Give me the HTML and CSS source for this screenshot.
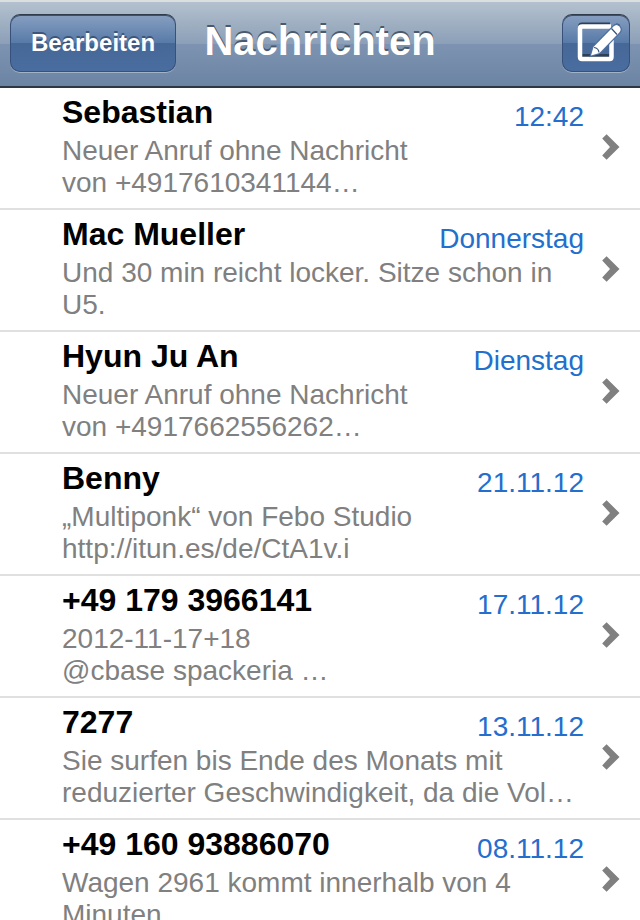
FILE: index.html
```html
<!DOCTYPE html>
<html lang="de">
<head>
    <meta charset="UTF-8">
    <meta name="viewport" content="width=device-width, initial-scale=1">
    <title>Nachrichten</title>
    <link rel="stylesheet" href="styles.css">
</head>
<body>
    <svg class="symbols" aria-hidden="true">
        <symbol id="chevron" viewBox="0 0 18 26">
            <path d="M0.2 4.6 4.600 0.2 17.5 13 4.600 25.8 0.2 21.400 8 13Z" fill="#808080"/>
        </symbol>
    </svg>

    <header class="navbar">
        <button class="navbar__button navbar__button--edit" type="button">Bearbeiten</button>
        <h1 class="navbar__title">Nachrichten</h1>
        <button class="navbar__button navbar__button--compose" type="button" aria-label="Neue Nachricht">
            <svg class="compose" viewBox="0 0 44 40">
                <!-- shadow above the strokes -->
                <path d="M33 1.500H5Q3 1.500 3 3.500M5 33H32" fill="none" stroke="#2d3f59" stroke-width="4"/>
                <path d="M14 31 16.500 23 37 2Q40 -1 43 2L42 8 22 28.500Z" fill="#2d3f59"/>
                <!-- sheet -->
                <path d="M34 3.500H5Q3 3.500 3 5.500V34Q3 36 5 36H32.500Q34.500 36 34.500 34V17" fill="none" stroke="#fff" stroke-width="4.500"/>
                <!-- pencil -->
                <path d="M14 32.500 16.500 24 36.500 3.500Q39.500 0.500 42.300 3.500 45 6.500 42.300 9.500L22.500 30Z" fill="#fff" stroke="#4d70a0" stroke-width="2.500" paint-order="stroke"/>
                <path d="M17 24.500Q21.500 25 22 29.500M34.500 5.500 40 11.500" fill="none" stroke="#35537f" stroke-width="1.200"/>
            </svg>
        </button>
    </header>

    <ul class="messages">
        <li>
            <a class="message" href="#sebastian">
                <div class="message__body">
                    <h2 class="message__name">Sebastian</h2>
                    <p class="message__text">Neuer Anruf ohne Nachricht<br>von +4917610341144…</p>
                </div>
                <time class="message__date">12:42</time>
                <svg class="message__arrow"><use href="#chevron"/></svg>
            </a>
        </li>
        <li>
            <a class="message" href="#mac-mueller">
                <div class="message__body">
                    <h2 class="message__name">Mac Mueller</h2>
                    <p class="message__text">Und 30 min reicht locker. Sitze schon in U5.</p>
                </div>
                <time class="message__date">Donnerstag</time>
                <svg class="message__arrow"><use href="#chevron"/></svg>
            </a>
        </li>
        <li>
            <a class="message" href="#hyun-ju-an">
                <div class="message__body">
                    <h2 class="message__name">Hyun Ju An</h2>
                    <p class="message__text">Neuer Anruf ohne Nachricht<br>von +4917662556262…</p>
                </div>
                <time class="message__date">Dienstag</time>
                <svg class="message__arrow"><use href="#chevron"/></svg>
            </a>
        </li>
        <li>
            <a class="message" href="#benny">
                <div class="message__body">
                    <h2 class="message__name">Benny</h2>
                    <p class="message__text">„Multiponk“ von Febo Studio<br>http://itun.es/de/CtA1v.i</p>
                </div>
                <time class="message__date">21.11.12</time>
                <svg class="message__arrow"><use href="#chevron"/></svg>
            </a>
        </li>
        <li>
            <a class="message" href="#491793966141">
                <div class="message__body">
                    <h2 class="message__name">+49 179 3966141</h2>
                    <p class="message__text">2012-11-17+18<br>@cbase spackeria …</p>
                </div>
                <time class="message__date">17.11.12</time>
                <svg class="message__arrow"><use href="#chevron"/></svg>
            </a>
        </li>
        <li>
            <a class="message" href="#7277">
                <div class="message__body">
                    <h2 class="message__name">7277</h2>
                    <p class="message__text">Sie surfen bis Ende des Monats mit reduzierter Geschwindigkeit, da die Vol…</p>
                </div>
                <time class="message__date">13.11.12</time>
                <svg class="message__arrow"><use href="#chevron"/></svg>
            </a>
        </li>
        <li>
            <a class="message" href="#4916093886070">
                <div class="message__body">
                    <h2 class="message__name">+49 160 93886070</h2>
                    <p class="message__text">Wagen 2961 kommt innerhalb von 4 Minuten</p>
                </div>
                <time class="message__date">08.11.12</time>
                <svg class="message__arrow"><use href="#chevron"/></svg>
            </a>
        </li>
    </ul>
</body>
</html>
```
FILE: styles.css
```css
* {
    box-sizing: border-box;
}
body {
    margin: 0;
    height: 100vh;
    display: flex;
    flex-direction: column;
    background: #fff;
    font-family: "Liberation Sans", Helvetica, Arial, sans-serif;
}
.symbols {
    display: none;
}

/* top bar */
.navbar {
    flex: none;
    display: grid;
    grid-template-columns: 1fr auto 1fr;
    align-items: center;
    padding: 12px 10px 14px;
    background: linear-gradient(#b4c1ce, #8b9fb7 50%, #7d93b1 50%, #6c84a4);
    border-top: 2px solid #dcdfe0;
    border-bottom: 2px solid #2d3642;
}
.navbar__title {
    margin: 0;
    font-size: 40px;
    line-height: 52px;
    padding-bottom: 4px;
    color: #fff;
    text-shadow: 0 -2px 0 #4b596b;
}
.navbar__button {
    height: 58px;
    padding: 0;
    display: flex;
    align-items: center;
    justify-content: center;
    border: 1px solid #37517a;
    border-top-color: #303c4c;
    border-radius: 10px;
    background: linear-gradient(#879fc0, #577aa8 50%, #456897 50%, #4a6da0);
    box-shadow: inset 0 1px 0 #3f5069, 0 1px 0 #a3b3c7;
    color: #fff;
    font: bold 24px/28px "Liberation Sans", Helvetica, Arial, sans-serif;
    text-shadow: 0 -2px 0 #3c5578;
    cursor: pointer;
}
.navbar__button--edit {
    justify-self: start;
    padding: 0 20px;
}
.navbar__button--compose {
    justify-self: end;
    width: 68px;
}
.compose {
    width: 44px;
    height: 40px;
    margin-left: 6px;
    overflow: visible;
}

/* conversation list */
.messages {
    flex: 1;
    min-height: 0;
    margin: 0;
    padding: 0;
    list-style: none;
    overflow-y: auto;
    scrollbar-width: none;
}
.message {
    display: grid;
    grid-template-columns: 1fr auto 18px;
    column-gap: 18px;
    padding: 6px 20px 9px 62px;
    border-bottom: 2px solid #e0e0e0;
    color: inherit;
    text-decoration: none;
}
/* name and text use the full width, the date shares the first line */
.message__body {
    grid-row: 1;
    grid-column: 1 / 3;
}
.message__name {
    margin: 0 0 5px;
    font-size: 32px;
    line-height: 36px;
    color: #000;
}
.message__text {
    margin: 0;
    font-size: 28px;
    line-height: 32px;
    color: #808080;
}
.message__date {
    grid-row: 1;
    grid-column: 2;
    padding-top: 7px;
    font-size: 28px;
    line-height: 32px;
    color: #246ecd;
}
.message__arrow {
    grid-row: 1;
    grid-column: 3;
    align-self: center;
    width: 18px;
    height: 26px;
}
```
